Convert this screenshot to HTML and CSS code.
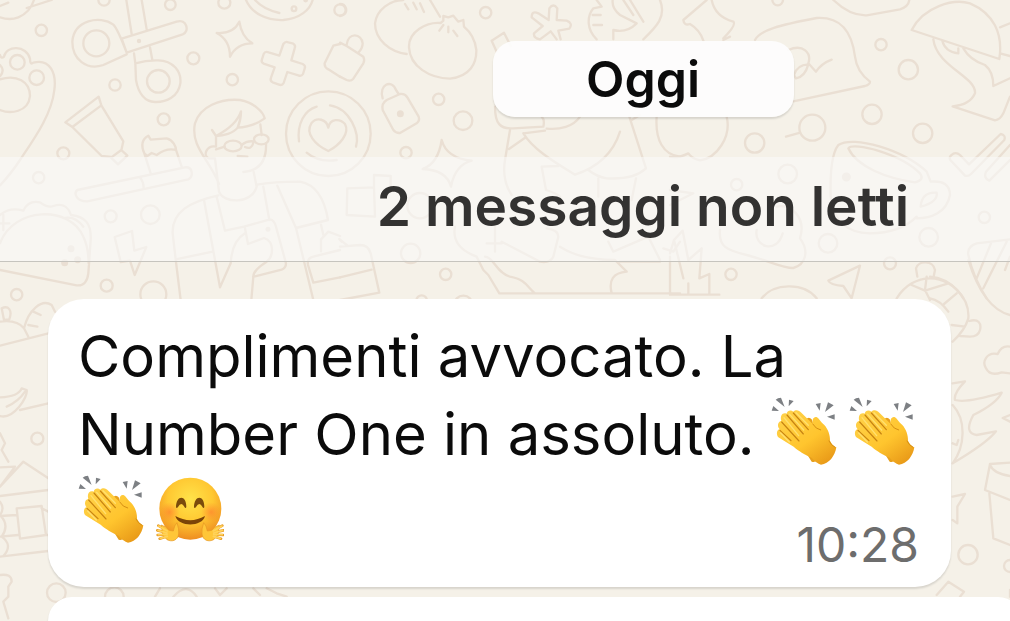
FILE: index.html
```html
<!DOCTYPE html>
<html lang="it">
<head>
<meta charset="utf-8">
<meta name="viewport" content="width=device-width, initial-scale=1">
<title>Chat</title>
<link rel="stylesheet" href="styles.css">
</head>
<body>
<svg class="wallpaper" width="1010" height="621" viewBox="0 0 1010 621" aria-hidden="true">
  <!-- left: paw, scissors, toothbrush, reader, taco -->
  <g transform="scale(.33333)">
    <path d="M0 52Q30 62 55 52Q90 38 102 0M80 24L155 0M0 18L25 8"/>
    <circle cx="124" cy="91" r="17"/><circle cx="312" cy="0" r="17"/><circle cx="511" cy="14" r="16"/><circle cx="673" cy="8" r="18"/><circle cx="1020" cy="30" r="17"/>
    <circle cx="345" cy="255" r="17"/><circle cx="580" cy="175" r="18"/><circle cx="697" cy="239" r="17"/><circle cx="491" cy="358" r="18"/><circle cx="190" cy="460" r="18"/><circle cx="116" cy="533" r="17"/><circle cx="332" cy="649" r="18"/><circle cx="451" cy="644" r="28"/><circle cx="320" cy="857" r="18"/><circle cx="50" cy="884" r="17"/><circle cx="460" cy="883" r="39"/>
    <path d="M0 165Q4 178 12 170C18 135 80 135 90 176Q90 196 100 188C150 175 170 220 163 270C155 345 100 420 60 480Q30 525 0 556"/>
    <circle cx="52" cy="187" r="22"/><circle cx="110" cy="233" r="22"/><path d="M0 195Q16 210 0 229M0 238C50 222 90 245 90 288C85 338 30 342 0 330"/>
    <path d="M379 0L395 102M425 0L440 88M365 116L530 65C560 55 570 95 548 103L380 158ZM380 163L310 195C260 212 217 178 217 125C222 60 300 45 340 74Q352 85 380 158M402 160L406 190Q440 180 474 181C520 182 545 215 541 250C535 290 500 307 465 306C435 305 415 280 408 240L406 190M450 142L457 180"/>
    <circle cx="289" cy="130" r="39"/><circle cx="475" cy="244" r="34"/><circle cx="417" cy="123" r="3"/>
    <path d="M718 65Q725 112 757 130Q710 130 690 170Q690 120 650 99Q700 102 718 65Z"/>
    <path d="M850 132Q856 123 865 127L880 131Q888 136 884 145L874 181L908 192Q918 197 914 206L909 222Q904 230 895 226L862 216L851 249Q846 258 835 253L818 247Q809 242 813 233L824 202L791 191Q782 187 786 178L791 162Q795 153 806 157L838 167Z"/>
    <path d="M1020 132L1000 137L974 190Q973 202 985 208L1020 230M738 0C755 40 800 62 850 60C900 55 930 30 938 0M765 0Q790 28 838 39"/><circle cx="882" cy="26" r="7"/><circle cx="917" cy="0" r="4"/>
    <path d="M196 367L296 290L304 316L217 381ZM217 381L305 468L333 471M304 316L370 424L364 451M364 450L382 467L354 493L333 473Z"/>
    <path d="M433 460C420 430 430 415 445 407L452 419L500 415C520 420 528 440 528 450C510 445 490 450 470 465L455 459L442 468L433 460L452 520M528 450L545 500M232 570L555 502C580 500 580 530 565 538L262 604C230 605 220 580 232 570ZM419 531Q431 545 431 565"/>
    <path d="M657 552C630 480 570 440 585 370C600 320 660 295 720 300C760 307 790 335 794 355Q760 380 713 383C700 400 670 408 648 408L636 390M713 383Q723 360 723 334Q710 375 648 408L648 440C620 435 608 465 625 475L645 475L657 575C670 610 755 615 770 560L761 516M730 516C780 512 800 480 798 430M781 373L785 405M648 448L674 440M713 468L742 470"/>
    <ellipse cx="699" cy="438" rx="26" ry="16"/><ellipse cx="784" cy="418" rx="22" ry="15"/><path d="M725 435Q740 422 760 424M735 441Q755 450 760 428"/>
    <path d="M655 586C570 605 515 635 518 700L527 778L542 900M527 778L638 755M612 600L660 862L692 790C695 740 710 715 735 700M650 590L675 692L732 680M771 554Q820 545 900 545C955 555 975 605 984 660L888 684L832 557M790 560L808 660M888 684L940 900M732 680L810 658Q823 660 828 680L858 790Q858 804 845 809L765 829M735 685L744 732L792 714C825 725 820 770 800 785Q760 810 760 830L754 900"/>
    <path d="M963 674L970 704M1020 708L985 695L963 718V754M1020 750L940 770Q920 775 924 795L940 848L1020 832"/>
    <circle cx="985" cy="401" r="127"/><path d="M985 453C945 435 915 400 934 370C950 350 980 357 985 383C990 355 1020 355 1035 372C1050 400 1020 435 985 453ZM897 424C890 370 915 330 950 320M1068 440C1080 400 1050 325 990 316M920 458Q955 488 1010 480"/>
    <path d="M0 645Q30 620 70 632Q85 600 120 607Q145 625 160 618Q200 605 213 645C255 650 275 670 272 720L265 820C262 845 250 858 230 856L0 810M0 730C40 620 210 615 250 710Q265 740 266 790M0 670H28M10 645V690M195 654Q225 648 250 680"/>
    <g class="dots"><circle cx="213" cy="746" r="7"/><circle cx="194" cy="788" r="7"/><circle cx="233" cy="779" r="7"/><circle cx="804" cy="688" r="4"/></g>
    <path d="M344 711L396 693L403 752L439 741L404 825L390 782L362 786Z"/>
  </g>
  <!-- centre: dumplings, padlocks, figures -->
  <g transform="translate(340 0) scale(.33333)">
    <path d="M0 48Q22 45 18 25Q14 12 0 12M200 162C150 155 105 120 105 70C110 30 150 0 190 0M270 0L300 50M195 12L205 28M220 8L230 28M240 10L252 36M302 69C260 65 205 95 207 142C210 200 270 235 330 236C390 230 410 190 409 150C405 115 390 95 372 80L370 60L355 65L340 47L325 52L310 48L310 62ZM310 75L298 92M325 80V97M340 92L352 108"/>
    <circle cx="437" cy="38" r="17"/><circle cx="296" cy="298" r="17"/><circle cx="369" cy="362" r="28"/><circle cx="198" cy="458" r="17"/><circle cx="212" cy="760" r="29"/><circle cx="317" cy="823" r="17"/><circle cx="240" cy="617" r="38"/><circle cx="245" cy="902" r="16"/><circle cx="370" cy="915" r="28"/>
    <path d="M0 128L20 138L70 170Q75 180 70 190L40 236Q32 245 20 240L0 230M20 134C25 95 65 100 68 130Q68 145 55 158"/>
    <path d="M140 300L180 282Q195 280 202 292L236 350Q240 362 230 370L180 399Q168 400 160 390L128 330Q124 310 140 300ZM128 295C115 255 155 235 168 270L176 282"/><circle cx="181" cy="341" r="7" class="dots"/>
    <path d="M455 122L492 98L512 138M470 155L455 122M626 60L628 25Q640 8 652 25L650 60L680 62Q700 70 688 86L655 92L662 118M626 60L595 40Q575 30 575 52L608 78L582 100Q580 115 600 118L632 94L650 118M770 118C740 90 740 50 760 25L785 20L770 0M758 45H782M760 75H786M820 118V90Q860 100 890 70L840 45Q815 25 818 0M870 0L910 65M850 0L880 45M960 0C980 50 950 80 910 118"/>
    <path d="M465 320C465 370 480 388 520 385L610 380Q615 360 605 350M620 386C660 390 700 380 720 350M510 390L495 480Q485 540 515 585M507 447L553 415M550 400L615 392M550 400C580 450 650 490 705 524Q810 490 840 395M868 350L918 505Q880 540 800 535Q770 530 745 510M775 535V590M888 535L875 600M655 498L605 500L618 570Q650 580 660 590M875 360L900 345M1020 470C970 465 945 420 950 350"/>
    <path d="M305 420Q320 475 395 482Q345 495 333 560Q320 510 248 507Q295 490 305 420ZM22 565L102 562V525L152 528V575M22 565L20 645L105 650L102 562"/>
    <path d="M345 680C335 730 370 755 410 770L430 810L445 825L478 880H1020M435 770C460 770 470 820 510 830C560 840 560 860 585 880M440 730H485M465 670V755M485 725L600 785Q630 790 640 770L655 710Q655 690 620 685M660 740Q720 780 825 780L860 815Q800 820 815 880M805 725L820 755L925 710L960 780M970 745L1000 755L1020 725M990 770V880M840 785L960 785"/>
    <path d="M0 740L60 735Q85 735 92 760L118 878L0 900M0 832L95 809M5 725Q-15 705 20 735"/>
  </g>
  <!-- right: cap, mushroom, mug, checks -->
  <g transform="translate(670 0) scale(.33333)">
    <path d="M125 0Q135 50 190 65Q200 75 160 115M110 0L40 60Q42 78 60 72Q90 90 100 122M160 120L180 110M255 120C270 90 330 75 440 54C510 50 545 90 555 170Q560 215 600 245Q600 253 585 258L370 304M355 150C400 130 425 160 415 190L438 215Q455 190 485 179M372 225Q380 195 415 193Q405 230 378 235ZM490 0Q540 48 590 46L690 28Q715 20 718 0"/>
    <circle cx="323" cy="0" r="16"/><circle cx="633" cy="134" r="17"/><circle cx="715" cy="209" r="29"/><circle cx="606" cy="343" r="29"/><circle cx="427" cy="383" r="39"/><circle cx="254" cy="429" r="29"/><circle cx="758" cy="400" r="29"/><circle cx="353" cy="522" r="28"/><circle cx="200" cy="554" r="17"/><circle cx="474" cy="730" r="28"/><circle cx="776" cy="712" r="28"/><circle cx="943" cy="652" r="17"/><circle cx="660" cy="790" r="18"/><circle cx="183" cy="823" r="17"/>
    <path d="M348 410L388 399M170 350C185 410 140 475 90 481Q65 475 55 460Q25 475 0 470"/>
    <path d="M725 90C760 20 850-5 900 10C970 40 1000 100 988 177ZM790 118C800 200 920 230 915 280Q900 315 848 319L975 361Q990 360 1000 340L1020 290M817 122Q825 155 865 160V145M880 145Q900 180 945 195Q970 215 970 258L1020 235M990 82L1020 70M990 160L1020 168"/>
    <path d="M482 590C480 520 485 460 505 435C550 405 700 450 770 515L782 545Q840 540 840 585C830 640 780 655 740 655M482 590C490 660 530 700 600 700Q690 700 740 650M535 445C550 425 690 460 750 520Q765 540 735 547C650 535 560 500 535 445ZM752 620Q755 575 800 578Q805 605 752 620"/><circle cx="529" cy="531" r="10" class="dots"/>
    <path d="M850 461Q835 470 841 480L885 527Q895 530 903 522L1003 420Q1008 405 992 402L897 493L870 465Q860 456 850 461ZM1020 435L948 515Q940 535 958 542L1020 480"/>
    <path d="M150 690C145 740 170 750 230 765C290 780 340 805 370 804C405 795 420 755 390 715C410 650 360 610 320 620M260 690C250 740 320 765 338 700M0 570L70 580L0 615M0 760L12 720L40 835M12 720L38 692L55 780L95 745L88 835L118 822V880M55 850V880M0 884H148M275 895C310 850 400 845 440 895M475 842L570 797L545 895L520 858Q480 855 475 842Z"/>
    <path d="M742 830L738 805C745 780 790 780 795 810L790 835M680 895C730 815 830 815 880 895M770 830L765 870L780 900M725 855L765 872L835 850M1020 718L920 730Q890 740 895 765Q910 835 950 895M965 725L920 835M1010 725L940 865M1020 770L1005 810"/>
  </g>
  <!-- lower right edge -->
  <g transform="translate(930 260) scale(.33333)">
    <path d="M0 50C60 55 120 110 115 175Q105 210 68 245M0 115Q30 120 55 155M80 100L42 132M65 195L105 200M118 183C145 175 155 190 150 210Q145 230 120 230L90 228M115 0Q160 145 240 165M240 260Q215 255 203 282C170 275 155 305 168 325Q180 350 215 337L240 340"/>
    <path d="M68 370L105 364Q70 400 75 420Q110 430 215 398Q200 430 130 465Q100 520 140 525L198 514Q170 550 68 610M68 435C110 480 105 560 68 610M68 550L80 555L85 540M240 465L218 474L240 485M180 612L240 608M180 612L165 690L240 720M180 615Q190 640 240 648M178 700L190 835L240 855M68 710L105 702L82 740V790L68 780M20 1005L55 965L102 995L90 1010"/>
    <circle cx="114" cy="884" r="29"/><circle cx="240" cy="918" r="18"/><path d="M240 990V1010"/>
  </g>
  <!-- lower left edge -->
  <g transform="translate(0 260) scale(.33333)">
    <path d="M0 257L145 220M0 185C35 180 60 190 72 205L85 230M5 145L12 180L28 178C38 150 25 135 5 145M72 205C85 150 125 115 155 135L165 155M100 155L122 165M85 195L112 200M0 412Q55 410 65 385L80 390C85 410 40 480 0 468M20 440Q55 425 75 395M60 450L145 430M0 520L15 550L5 570L25 605M0 622L45 620L0 680L70 605L145 655M0 708L145 690M0 768L50 765M50 745L125 738L138 825L60 836ZM125 745L145 755M0 830L55 825M138 825H145M0 725Q15 745 0 765Q30 795 5 830Q40 855 10 888M0 890L145 873M0 945Q35 940 35 965L25 980V1010L10 1025L25 1075"/>
    <circle cx="112" cy="536" r="18"/><circle cx="169" cy="998" r="28"/><circle cx="343" cy="1010" r="28"/>
    <path d="M465 1010L480 985M520 1010Q560 965 590 1010M645 985L660 1005L680 985M760 985L780 1005M800 985L830 1000L860 1010"/>
  </g>
</svg>

<svg class="defs" aria-hidden="true">
  <defs>
    <linearGradient id="skin" x1="0" y1="0" x2=".8" y2="1"><stop offset="0" stop-color="#ffd34d"/><stop offset=".6" stop-color="#ffc52e"/><stop offset="1" stop-color="#e99a18"/></linearGradient>
    <radialGradient id="face" cx=".5" cy=".35" r=".66"><stop offset="0" stop-color="#ffe34a"/><stop offset=".55" stop-color="#ffc832"/><stop offset="1" stop-color="#ee8b20"/></radialGradient>
    <radialGradient id="blush"><stop offset="0" stop-color="#ff6d2d" stop-opacity=".55"/><stop offset="1" stop-color="#ff7b2d" stop-opacity="0"/></radialGradient>
    <symbol id="clap" viewBox="90 52 204 210">
      <path fill="#7d8084" d="M104 63Q110 57 120 57L131 85ZM144 63L158 67L143 83ZM97 82L114 97L92 96ZM224 76L239 73L236 96ZM261 71L278 80L252 100ZM258 114L281 107L281 123Z"/>
      <path fill="#e7a01d" d="M194 122Q204 112 212 122L222 150L190 145ZM200 230L212 249Q225 253 235 240L210 220Z"/>
      <path fill="url(#skin)" d="M112 176C105 168 107 153 116 152C107 142 111 128 121 127C116 111 125 100 137 105C139 95 150 93 157 99C164 92 174 94 181 102L216 137C211 124 219 111 228 116C234 120 239 130 250 139C261 151 268 170 267 186Q274 201 286 206C282 232 264 256 240 258Q226 254 212 237C189 226 174 218 158 204Z"/>
      <path fill="none" stroke="#c78312" stroke-width="3.5" stroke-linecap="round" d="M157 103L202 153M138 109L187 166M122 130L174 187M117 155L150 186"/>
      <path fill="none" stroke="#ffe071" stroke-width="4" stroke-linecap="round" d="M165 102L202 140M146 107L188 154M129 117L173 171M119 163L145 190"/>
      <path fill="none" stroke="#d58e14" stroke-width="3" stroke-linecap="round" d="M216 137Q224 151 239 154M264 187Q270 200 281 205"/>
    </symbol>
    <symbol id="hug" viewBox="270 31 204 210">
      <circle cx="373" cy="135" r="93" fill="url(#face)"/>
      <circle cx="311" cy="145" r="30" fill="url(#blush)"/><circle cx="435" cy="145" r="30" fill="url(#blush)"/>
      <path fill="#7b4b0c" d="M330 131C330 94 361 92 361 130Q359 136 355 129Q346 112 336 130Q332 136 330 131ZM384 131C384 94 415 92 415 130Q413 136 409 129Q400 112 390 130Q386 136 384 131Z"/>
      <path fill="#7b4308" d="M328 157Q373 182 417 157C409 191 337 191 328 157Z"/>
      <g id="hand">
        <path fill="none" stroke="#e89b25" stroke-width="8" stroke-linecap="round" d="M277 186L304 201M274 200L304 207M275 214L303 212M281 225L306 217"/>
        <path fill="#ffc638" stroke="#e59622" stroke-width="2" d="M286 184Q300 188 309 200L322 202Q325 184 333 177Q340 197 338 211C336 230 318 236 303 228L290 214Z"/>
        <path fill="none" stroke="#ffd25a" stroke-width="5" stroke-linecap="round" d="M278 187L304 202M276 200L303 208M277 213L303 212M283 224L304 218"/>
      </g>
      <use href="#hand" transform="matrix(-1 0 0 1 746 0)"/>
    </symbol>
  </defs>
</svg>

<main class="chat">
  <div class="row"><time class="date">Oggi</time></div>
  <div class="row unread">2 messaggi non letti</div>
  <article class="bubble">
    <p class="text">Complimenti avvocato. La Number One in assoluto. <svg class="emoji" role="img" aria-label="applauso"><use href="#clap"/></svg><wbr><svg class="emoji" role="img" aria-label="applauso"><use href="#clap"/></svg><wbr><svg class="emoji" role="img" aria-label="applauso"><use href="#clap"/></svg><wbr><svg class="emoji" role="img" aria-label="abbraccio"><use href="#hug"/></svg></p>
    <time class="time">10:28</time>
  </article>
  <article class="bubble next"></article>
</main>
</body>
</html>
```
FILE: styles.css
```css
* { box-sizing: border-box; }

body {
  margin: 0;
  overflow: hidden;
  background: #f5f1e8;
  color: #0b0b0b;
  font-family: Inter, "Liberation Sans", sans-serif;
}

.wallpaper {
  position: absolute;
  top: 0;
  left: 0;
  fill: none;
  stroke: #eadfd3;
  stroke-width: 7;
  stroke-linejoin: round;
  stroke-linecap: round;
}

.dots { fill: #eadfd3; }

.defs {
  position: absolute;
  width: 0;
  height: 0;
}

.chat {
  position: relative;
  display: flex;
  flex-direction: column;
  min-height: 100vh;
  padding-top: 41px;
}

.row {
  display: flex;
  justify-content: center;
  padding-left: 276px;
}

.date {
  width: 301px;
  border-radius: 22px;
  background: rgba(253, 253, 253, .92);
  box-shadow: 0 2px 2px rgba(0, 0, 0, .12);
  font-size: 50px;
  font-weight: 600;
  line-height: 76px;
  text-align: center;
}

.unread {
  margin-top: 40px;
  padding-bottom: 6px;
  border-bottom: 1px solid #c6c4be;
  background: rgba(250, 250, 250, .58);
  color: #333231;
  font-size: 55px;
  font-weight: 600;
  line-height: 98px;
  white-space: nowrap;
}

.bubble {
  display: grid;
  margin: 37px 59px 0 48px;
  padding: 18px 22px 36px 30px;
  border-radius: 36px;
  background: #fff;
  box-shadow: 0 2px 2px rgba(0, 0, 0, .12);
}

.text {
  grid-area: 1 / 1;
  margin: 0;
  font-size: 58px;
  line-height: 78px;
}

.emoji {
  width: 68px;
  height: 70px;
  margin: -10px 10px -10px 0;
  vertical-align: -1px;
}

.time {
  grid-area: 1 / 1;
  place-self: end;
  margin: 0 10px -22px 0;
  color: #6d6d6d;
  font-size: 48px;
  line-height: 56px;
}

.next {
  flex: 1;
  margin: 10px -12px 0 48px;
  padding: 0;
  border-radius: 36px 36px 0 0;
}
```
